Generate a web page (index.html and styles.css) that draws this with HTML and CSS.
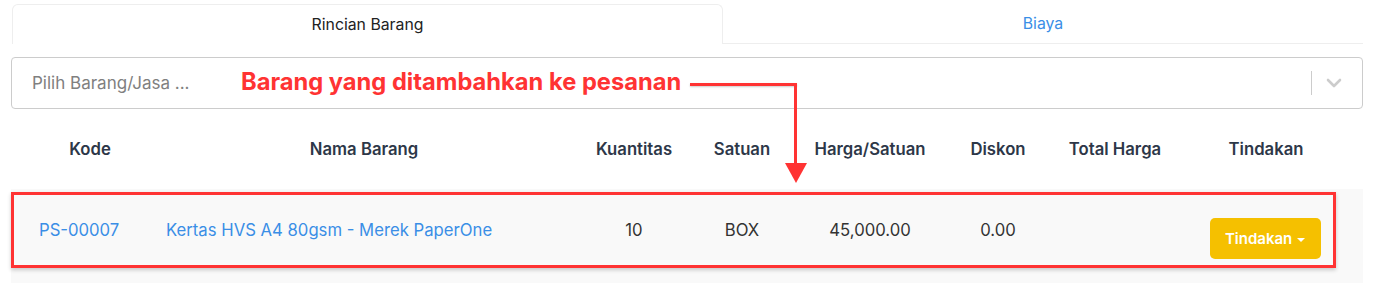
FILE: index.html
```html
<!DOCTYPE html>
<html lang="id">
<head>
    <meta charset="UTF-8">
    <meta name="viewport" content="width=device-width, initial-scale=1.0">
    <title>Rincian Barang</title>
    <link rel="stylesheet" href="styles.css">
</head>
<body>
    <div class="page">
        <!-- Tab -->
        <div class="tabs">
            <div class="tab active">Rincian Barang</div>
            <div class="tab">Biaya</div>
        </div>

        <!-- Pilih barang -->
        <div class="select">
            <span class="placeholder">Pilih Barang/Jasa ...</span>
            <span class="select-sep"></span>
            <svg class="chevron" width="16" height="10" viewBox="0 0 16 10">
                <path d="M2 2 L8 8 L14 2" fill="none" stroke="#cccccc" stroke-width="2.6" stroke-linecap="round" stroke-linejoin="round"/>
            </svg>
        </div>

        <!-- Tabel barang -->
        <div class="table">
            <div class="row head">
                <div class="cell kode">Kode</div>
                <div class="cell">Nama Barang</div>
                <div class="cell">Kuantitas</div>
                <div class="cell">Satuan</div>
                <div class="cell">Harga/Satuan</div>
                <div class="cell">Diskon</div>
                <div class="cell">Total Harga</div>
                <div class="cell">Tindakan</div>
            </div>
            <div class="body">
                <div class="row item">
                    <div class="cell code"><a href="#">PS-00007</a></div>
                    <div class="cell name"><a href="#">Kertas HVS A4 80gsm - Merek PaperOne</a></div>
                    <div class="cell">10</div>
                    <div class="cell">BOX</div>
                    <div class="cell">45,000.00</div>
                    <div class="cell">0.00</div>
                    <div class="cell"></div>
                    <div class="cell action"><button class="btn-action">Tindakan <span class="caret"></span></button></div>
                </div>
            </div>
        </div>

        <!-- Anotasi -->
        <div class="note">Barang yang ditambahkan ke pesanan</div>
        <div class="note-line"></div>
        <div class="note-drop"></div>
        <div class="note-head"></div>
        <div class="highlight"></div>
    </div>
</body>
</html>
```

FILE: styles.css
```css
/* Dasar */
body {
    margin: 0;
    font-family: Inter, "Noto Sans", sans-serif;
    color: #333;
    background: #fff;
}

.page {
    position: relative;
    width: 1352px;
    padding: 4px 0 0 11px;
}

/* Tab */
.tabs {
    display: flex;
    height: 40px;
}

.tab {
    display: flex;
    align-items: center;
    justify-content: center;
    font-size: 15.8px;
    color: #3a8ee6;
    border-bottom: 1px solid #eeeeee;
    box-sizing: border-box;
}

.tab:first-child {
    width: 711px;
    margin-left: 1px;
}

.tab:last-child {
    flex: 1;
}

.tab.active {
    color: #222;
    border: 1px solid #eeeeee;
    border-bottom: none;
    border-radius: 6px 6px 0 0;
}

/* Select */
.select {
    display: flex;
    align-items: center;
    height: 52px;
    margin-top: 13px;
    border: 1px solid #cccccc;
    border-radius: 4px;
    box-sizing: border-box;
}

.placeholder {
    flex: 1;
    padding-left: 20px;
    font-size: 17px;
    color: #808080;
}

.select-sep {
    width: 1px;
    height: 24px;
    background: #cccccc;
}

.chevron {
    margin: 0 20px 0 14px;
}

/* Tabel */
.row {
    display: grid;
    grid-template-columns: 150px 406px 134px 82px 174px 82px 152px 150px;
    align-items: center;
}

.cell {
    text-align: center;
    font-size: 16.7px;
}

.head {
    height: 80px;
}

.head .cell {
    font-weight: 600;
    color: #2d3748;
}

.head .kode {
    padding-left: 8px;
}

.body {
    background: #f9f9f9;
    height: 94px;
}

.item {
    height: 82px;
}

.item .cell {
    color: #333;
}

.cell.code {
    text-align: left;
    padding-left: 28px;
}

.cell.name {
    text-align: left;
    padding-left: 5px;
}

.item a {
    color: #3a8ee6;
    text-decoration: none;
}

.btn-action {
    font-family: inherit;
    font-size: 15px;
    font-weight: 600;
    color: #fff;
    background: #f5c000;
    border: none;
    border-radius: 5px;
    width: 111px;
    height: 41px;
    margin: 17px 0 0 -2px;
    padding: 0;
    cursor: pointer;
}

.caret {
    display: inline-block;
    width: 0;
    height: 0;
    border-left: 4px solid transparent;
    border-right: 4px solid transparent;
    border-top: 4px solid #fff;
    vertical-align: middle;
    margin-left: 1px;
}

/* Anotasi merah */
.note {
    position: absolute;
    left: 241px;
    top: 67px;
    font-size: 23.7px;
    font-weight: 700;
    color: #ff3333;
}

.note-line {
    position: absolute;
    left: 690px;
    top: 83px;
    width: 107px;
    height: 3px;
    background: #ff3333;
    box-shadow: 0 1px 2px rgba(0, 0, 0, 0.2);
}

.note-drop {
    position: absolute;
    left: 794px;
    top: 83px;
    width: 3px;
    height: 82px;
    background: #ff3333;
}

.note-head {
    position: absolute;
    left: 785px;
    top: 163px;
    width: 0;
    height: 0;
    border-left: 11px solid transparent;
    border-right: 11px solid transparent;
    border-top: 20px solid #ff3333;
}

.highlight {
    position: absolute;
    left: 11px;
    top: 192px;
    width: 1325px;
    height: 76px;
    border: 3px solid #ff3333;
    box-sizing: border-box;
    box-shadow: 0 2px 4px rgba(0, 0, 0, 0.2);
}
```
